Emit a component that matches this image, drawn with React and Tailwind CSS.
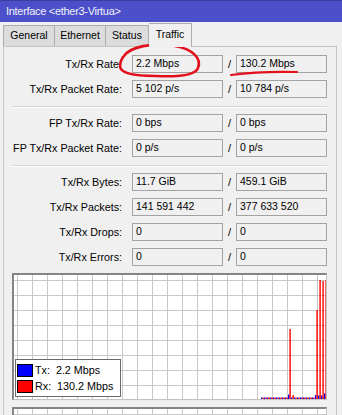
const font = "font-['Liberation_Sans','Arial',sans-serif]"

const section1 = [
  { label: 'Tx/Rx Rate:', tx: '2.2 Mbps', rx: '130.2 Mbps' },
  { label: 'Tx/Rx Packet Rate:', tx: '5 102 p/s', rx: '10 784 p/s' },
]
const section2 = [
  { label: 'FP Tx/Rx Rate:', tx: '0 bps', rx: '0 bps' },
  { label: 'FP Tx/Rx Packet Rate:', tx: '0 p/s', rx: '0 p/s' },
]
const section3 = [
  { label: 'Tx/Rx Bytes:', tx: '11.7 GiB', rx: '459.1 GiB' },
  { label: 'Tx/Rx Packets:', tx: '141 591 442', rx: '377 633 520' },
  { label: 'Tx/Rx Drops:', tx: '0', rx: '0' },
  { label: 'Tx/Rx Errors:', tx: '0', rx: '0' },
]

const tabs = [
  { name: 'General', w: 'w-[52px]' },
  { name: 'Ethernet', w: 'w-[51px]' },
  { name: 'Status', w: 'w-[43px]' },
]

// tx / rx samples on the right end of the graph (heights in px)
const txH = [1.5, 1.5, 1.5, 1.5, 1.5, 1.5, 1.5, 1.5, 1.5, 4.5, 1.5, 1.5, 1.5, 1.5, 1.5, 1.5, 1.5, 1.5, 4, 3.5, 3.5, 5.5]
const rxH = [1.5, 1.5, 1.5, 1.5, 1.5, 1.5, 1.5, 1.5, 1.5, 70, 4, 1.5, 1.5, 1.5, 1.5, 1.5, 1.5, 1.5, 89, 119, 118, 119]

function Field({ value }) {
  return (
    <div className="flex h-[18px] w-[91px] items-center border border-[#a3a3a3] bg-[#f0f0f0] pl-[3px] text-[10.5px] text-black">
      {value}
    </div>
  )
}

function Row({ label, tx, rx }) {
  return (
    <div className="flex h-[18px] items-center">
      <div className="w-[118px] text-right text-[10.75px] text-black">{label}</div>
      <div className="ml-[10px]"><Field value={tx} /></div>
      <div className="w-[13px] text-center text-[11px] text-black">/</div>
      <Field value={rx} />
    </div>
  )
}

function Graph({ children }) {
  return (
    <div className="relative ml-[8px] w-[315px] border-t-2 border-l-2 border-r border-b border-t-[#858585] border-l-[#858585] border-r-[#c2c2c2] border-b-[#c2c2c2] bg-white bg-[linear-gradient(to_right,#c9c9c9_1px,transparent_1px),linear-gradient(to_bottom,#c9c9c9_1px,transparent_1px)] bg-[size:15px_15px] bg-[position:3px_5px]">
      <svg width="312" height="124" viewBox="0 0 312 124" className="block">
        {children}
      </svg>
    </div>
  )
}

function Separator() {
  return <div className="ml-[8px] w-[315px] border-t border-[#d5d5d5] border-b border-b-white" />
}

export default function App() {
  return (
    <div className={`relative h-[415px] w-[342px] overflow-hidden bg-[#f0f0f0] ${font}`}>
      <div className="flex h-[22px] items-center border-t border-[#3b3e9e] bg-[#4b4fc9] pl-[6px] text-[11px] tracking-[-0.3px] text-[#f2f2fb]">
        Interface &lt;ether3-Virtua&gt;
      </div>

      <div className="flex h-[24px] items-end pl-[3px] text-[10.5px] text-black">
        {tabs.map((t, i) => (
          <div
            key={t.name}
            className={`flex h-[21px] ${t.w} items-center justify-center border-t border-r border-[#acacac] bg-[#dcdcdc] ${i === 0 ? 'border-l' : ''}`}
          >
            {t.name}
          </div>
        ))}
        <div className="relative z-10 -mb-px flex h-[24px] w-[43px] items-center justify-center border-t border-r border-[#acacac] bg-[#f0f0f0] pb-[2px]">
          Traffic
        </div>
      </div>

      <div className="ml-[3px] w-[334px] border-t border-l border-r border-[#c4c4c4] pt-[8px] pb-[20px]">
        <div className="flex flex-col gap-[7px]">
          {section1.map((r) => <Row key={r.label} {...r} />)}
        </div>
        <div className="mt-[8px]"><Separator /></div>
        <div className="mt-[6px] flex flex-col gap-[7px]">
          {section2.map((r) => <Row key={r.label} {...r} />)}
        </div>
        <div className="mt-[8px]"><Separator /></div>
        <div className="mt-[6px] flex flex-col gap-[7px]">
          {section3.map((r) => <Row key={r.label} {...r} />)}
        </div>

        <div className="mt-[7px]">
          <Graph>
            {txH.map((h, k) => (
              <rect key={'t' + k} x={247 + 3 * k} y={124 - h} width="1.4" height={h} fill="#0000ff" />
            ))}
            {rxH.map((h, k) => (
              <rect key={'r' + k} x={248.4 + 3 * k} y={124 - h} width="1.4" height={h} fill="#ff0000" />
            ))}
          </Graph>
          <div className="absolute left-[15px] top-[359px] h-[38px] w-[106px] border border-[#6a6a6a] bg-white pl-[1px] pt-[4px] text-[10.75px] text-black">
            <div className="flex h-[13px] items-center">
              <div className="h-[13px] w-[16px] border border-black bg-[#0000ff]" />
              <span className="ml-[2px] whitespace-pre">Tx:  2.2 Mbps</span>
            </div>
            <div className="mt-[3px] flex h-[13px] items-center">
              <div className="h-[13px] w-[16px] border border-black bg-[#ff0000]" />
              <span className="ml-[2px] whitespace-pre">Rx:  130.2 Mbps</span>
            </div>
          </div>
        </div>

        <div className="mt-[7px]">
          <Graph />
        </div>
      </div>

      {/* hand-drawn marks */}
      <svg className="pointer-events-none absolute left-0 top-0" width="342" height="415">
        <path
          d="M124 56 C 130 47, 152 42, 175 46 C 192 49, 202 58, 198 68 C 195 76, 176 77, 156 76 C 136 76, 120 74, 120 66 C 120 62, 121 60, 123 57"
          fill="none"
          stroke="#e3101c"
          strokeWidth="2.6"
          strokeLinecap="round"
        />
        <path d="M231 75 C 246 73, 262 71, 297 72" fill="none" stroke="#e3101c" strokeWidth="2.2" strokeLinecap="round" />
      </svg>
    </div>
  )
}
